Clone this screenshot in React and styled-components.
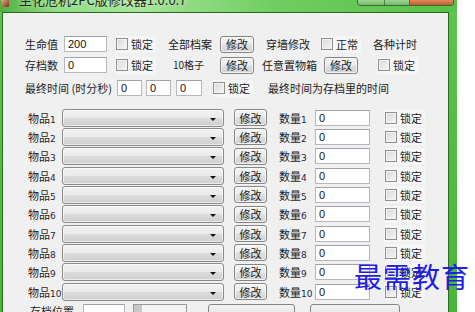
import React from "react";
import styled, { createGlobalStyle } from "styled-components";

const GlobalStyle = createGlobalStyle`
  html, body {
    margin: 0;
    padding: 0;
    background: #ffffff;
    overflow: hidden;
  }
  body {
    font-family: "Liberation Sans", "Noto Sans CJK SC", sans-serif;
    font-size: 11px;
    color: #1a1a1a;
  }
`;

const ITEMS = [1, 2, 3, 4, 5, 6, 7, 8, 9, 10];

export default function App() {
  return (
    <>
      <GlobalStyle />
      <Window>
        <TitleBar>
          <AppIcon />
          <TitleText>生化危机2PC版修改器1.0.0.7</TitleText>
          <CaptionGroup>
            <CaptionButton $w={26} />
            <CaptionButton $w={24} />
            <CaptionButton $w={43} $close />
          </CaptionGroup>
        </TitleBar>
        <Client>
          <TopRow $mt={22}>
            <Cell $w={39}><Text>生命值</Text></Cell>
            <Cell $w={51}><TextBox $w={43}>200</TextBox></Cell>
            <Cell $w={53}><Check label="锁定" /></Cell>
            <Cell $w={52}><Text>全部档案</Text></Cell>
            <Cell $w={46}><Button>修改</Button></Cell>
            <Cell $w={54}><Text>穿墙修改</Text></Cell>
            <Cell $w={53}><Check label="正常" /></Cell>
            <Cell $w={60}><Text>各种计时</Text></Cell>
          </TopRow>
          <TopRow $mt={3}>
            <Cell $w={39}><Text>存档数</Text></Cell>
            <Cell $w={51}><TextBox $w={43}>0</TextBox></Cell>
            <Cell $w={53}><Check label="锁定" /></Cell>
            <Cell $w={52}><Text $small $pl={5}>10格子</Text></Cell>
            <Cell $w={42}><Button>修改</Button></Cell>
            <Cell $w={62}><Text>任意置物箱</Text></Cell>
            <Cell $w={53}><Button>修改</Button></Cell>
            <Cell $w={53}><Check label="锁定" /></Cell>
          </TopRow>
          <TopRow $mt={5}>
            <Cell $w={92}><Text>最终时间 (时分秒)</Text></Cell>
            <Cell $w={29}><TextBox $w={25}>0</TextBox></Cell>
            <Cell $w={30}><TextBox $w={25}>0</TextBox></Cell>
            <Cell $w={36}><TextBox $w={26}>0</TextBox></Cell>
            <Cell $w={56}><Check label="锁定" /></Cell>
            <Cell $w={140}><Text>最终时间为存档里的时间</Text></Cell>
          </TopRow>

          <ItemGrid>
            {ITEMS.map((n) => (
              <ItemRow key={n}>
                <ItemLabel $w={37} $pl={3}>物品<Num>{n}</Num></ItemLabel>
                <Combo>
                  <Arrow />
                </Combo>
                <Button $ml={10} $w={33}>修改</Button>
                <ItemLabel $w={48} $pl={12}>数量<Num>{n}</Num></ItemLabel>
                <TextBox $w={55}>0</TextBox>
                <Check label="锁定" $ml={14} />
              </ItemRow>
            ))}
          </ItemGrid>

          <BottomRow>
            <Cell $w={55}><Text $pl={2}>存档位置</Text></Cell>
            <Cell $w={50}><TextBox $w={42} /></Cell>
            <Cell $w={75}><SlotBox /></Cell>
            <Cell $w={102}><WideButton $w={87} /></Cell>
            <Cell $w={95}><WideButton $w={90} /></Cell>
          </BottomRow>
        </Client>
        <Watermark>最需教育</Watermark>
      </Window>
    </>
  );
}

function Check({ label, $ml }) {
  return (
    <CheckWrap $ml={$ml}>
      <CheckBox />
      <Text>{label}</Text>
    </CheckWrap>
  );
}

const Window = styled.div`
  position: relative;
  width: 457px;
  height: 340px;
  display: flex;
  flex-direction: column;
  background: linear-gradient(180deg, #7fd470 0px, #5cc34c 14px, #46b536 100%);
  box-sizing: border-box;
`;

const TitleBar = styled.div`
  height: 12px;
  display: flex;
  align-items: flex-end;
  overflow: hidden;
  position: relative;
  background: linear-gradient(90deg, #4fb140 0%, #8edc84 12%, #a6e49a 30%, #6fce5f 60%, #58c049 100%);
`;

const AppIcon = styled.div`
  width: 8px;
  height: 7px;
  margin: 0 10px 5px 1px;
  align-self: flex-start;
  background: linear-gradient(135deg, #d9b08a, #8a2a1a);
  border-radius: 0 0 1px 1px;
`;

const TitleText = styled.div`
  font-family: "Noto Sans CJK SC", sans-serif;
  font-size: 13px;
  line-height: 13px;
  color: #1f2a1a;
  margin-bottom: 6px;
  white-space: nowrap;
  text-shadow: 0 0 4px rgba(255, 255, 255, 0.7);
`;

const CaptionGroup = styled.div`
  position: absolute;
  top: 0;
  left: 357px;
  display: flex;
  height: 5px;
  border: 1px solid #3c6a34;
  border-top: none;
  border-radius: 0 0 4px 4px;
  overflow: hidden;
`;

const CaptionButton = styled.div`
  width: ${(p) => p.$w}px;
  height: 100%;
  background: ${(p) => (p.$close ? "linear-gradient(#e08a5c, #c45a30)" : "linear-gradient(#9fd494, #74b868)")};
  border-left: 1px solid rgba(40, 80, 30, 0.6);
  &:first-child {
    border-left: none;
  }
`;

const Client = styled.div`
  flex: 1;
  margin: 0 8px 0 2px;
  background: #f0f0f0;
  border: 1px solid #2c6a22;
  padding-left: 22px;
  display: flex;
  flex-direction: column;
`;

const TopRow = styled.div`
  display: flex;
  align-items: center;
  height: 18px;
  margin-top: ${(p) => p.$mt}px;
`;

const Cell = styled.div`
  width: ${(p) => p.$w}px;
  flex: none;
  display: flex;
  align-items: center;
`;

const Text = styled.span`
  font-family: "Noto Sans CJK SC", sans-serif;
  font-size: ${(p) => (p.$small ? "10px" : "11px")};
  line-height: 14px;
  white-space: nowrap;
  color: #1c1c1c;
  padding-left: ${(p) => p.$pl || 0}px;
`;

const TextBox = styled.div`
  width: ${(p) => p.$w}px;
  height: 16px;
  box-sizing: border-box;
  background: #ffffff;
  border: 1px solid #b5b8bf;
  border-top-color: #9fa2a8;
  font-family: "Liberation Sans", sans-serif;
  font-size: 11px;
  line-height: 14px;
  padding-left: 3px;
  color: #111;
  flex: none;
  margin-left: ${(p) => p.$ml || 0}px;
`;

const Button = styled.div`
  width: ${(p) => p.$w || 34}px;
  height: 17px;
  box-sizing: border-box;
  flex: none;
  margin-left: ${(p) => p.$ml || 0}px;
  border: 1px solid #858585;
  border-radius: 3px;
  background: linear-gradient(#f4f4f4 0%, #ececec 45%, #dedede 55%, #d2d2d2 100%);
  box-shadow: inset 0 0 0 1px rgba(255, 255, 255, 0.7);
  display: flex;
  align-items: center;
  justify-content: center;
  font-family: "Noto Sans CJK SC", sans-serif;
  font-size: 11px;
  color: #1c1c1c;
`;

const CheckWrap = styled.div`
  display: flex;
  align-items: center;
  gap: 3px;
  height: 17px;
  padding: 0 3px 0 1px;
  margin-left: ${(p) => p.$ml || 0}px;
  background: #f6f6f6;
  flex: none;
`;

const CheckBox = styled.div`
  width: 12px;
  height: 12px;
  box-sizing: border-box;
  border: 1px solid #8e8f8f;
  background: linear-gradient(135deg, #d8d8d8, #f7f7f7);
  box-shadow: inset 0 0 0 1px #f4f4f4;
`;

const ItemGrid = styled.div`
  display: grid;
  grid-auto-rows: 19.33px;
  margin-top: 11px;
`;

const ItemRow = styled.div`
  display: flex;
  align-items: center;
`;

const ItemLabel = styled.div`
  width: ${(p) => p.$w}px;
  box-sizing: border-box;
  padding-left: ${(p) => p.$pl}px;
  flex: none;
  font-family: "Noto Sans CJK SC", sans-serif;
  font-size: 11px;
  white-space: nowrap;
  color: #1c1c1c;
`;

const Num = styled.span`
  font-family: "DejaVu Sans", sans-serif;
  font-size: 9px;
  color: #1e2440;
`;

const Combo = styled.div`
  position: relative;
  width: 162px;
  height: 18px;
  box-sizing: border-box;
  flex: none;
  border: 1px solid #8a8a8a;
  border-radius: 3px;
  background: linear-gradient(#f2f2f2 0%, #ebebeb 48%, #dcdcdc 52%, #cfcfcf 100%);
  box-shadow: inset 0 0 0 1px rgba(255, 255, 255, 0.6);
`;

const Arrow = styled.div`
  position: absolute;
  right: 7px;
  top: 8px;
  width: 0;
  height: 0;
  border-left: 3px solid transparent;
  border-right: 3px solid transparent;
  border-top: 3px solid #111;
`;

const BottomRow = styled.div`
  display: flex;
  align-items: flex-start;
  margin-top: 3px;
  padding-left: 3px;
  height: 18px;
`;

const SlotBox = styled.div`
  width: 54px;
  height: 16px;
  box-sizing: border-box;
  border: 1px solid #9a9a9a;
  background: linear-gradient(90deg, #c8c8c8 0 8px, #f4f4f4 8px);
`;

const WideButton = styled.div`
  width: ${(p) => p.$w}px;
  height: 18px;
  box-sizing: border-box;
  border: 1px solid #858585;
  border-radius: 3px;
  background: linear-gradient(#f4f4f4, #dcdcdc);
`;

const Watermark = styled.div`
  position: absolute;
  left: 354px;
  top: 259px;
  font-family: "Noto Sans CJK SC", sans-serif;
  font-size: 28px;
  line-height: 34px;
  letter-spacing: 1px;
  color: #1e1ee6;
  white-space: nowrap;
`;
